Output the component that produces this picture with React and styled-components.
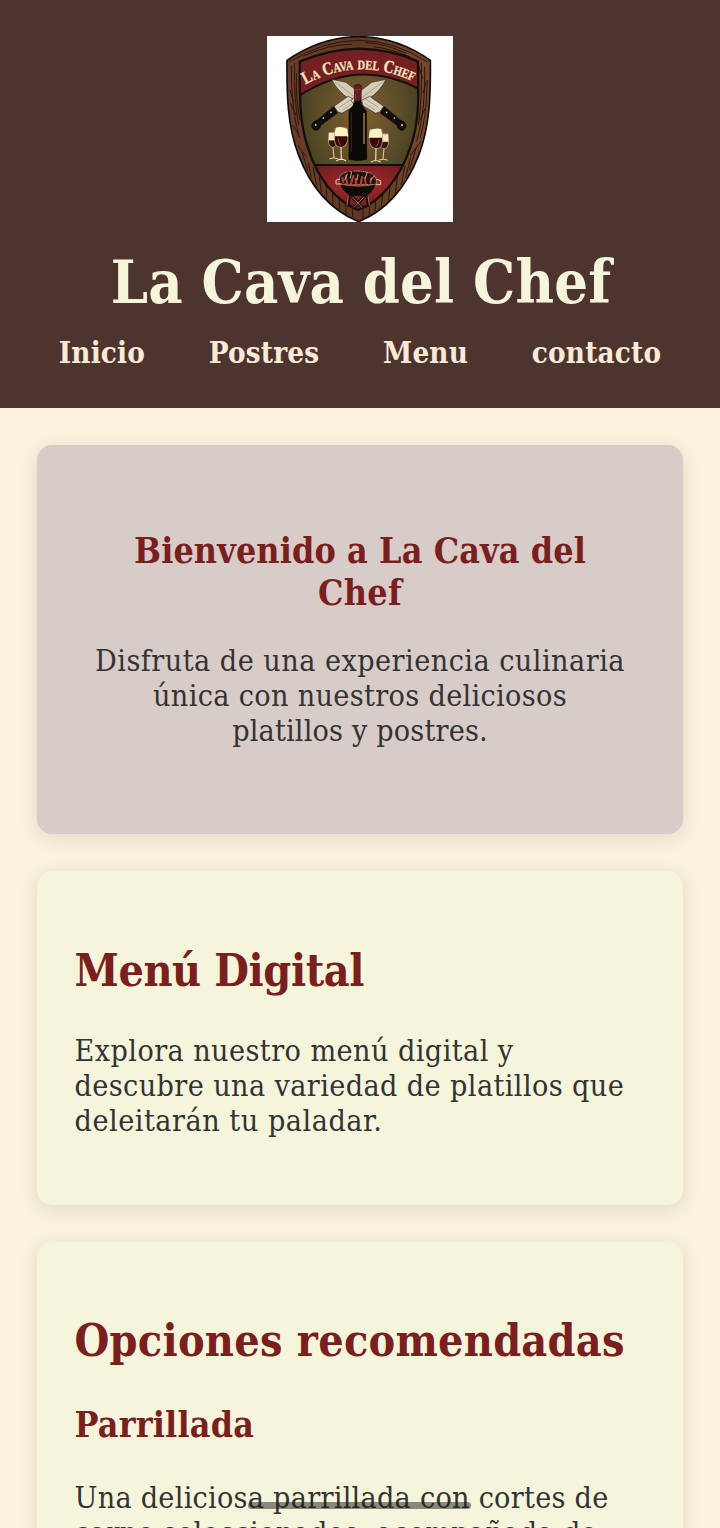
import React from "react";
import styled, { createGlobalStyle } from "styled-components";

const GlobalStyle = createGlobalStyle`
  * { box-sizing: border-box; }
  body {
    margin: 0;
    background: #faf1de;
    color: #333;
    font-family: "DejaVu Serif Condensed", "DejaVu Serif", "Liberation Serif", serif;
  }
`;

const Page = styled.div`
  height: 1528px;
  overflow: hidden;
  background: #faf1de;
`;

const Header = styled.header`
  display: flex;
  flex-direction: column;
  align-items: center;
  height: 408px;
  padding-top: 36px;
  background: #4e342e;
  color: #f5f5dc;
`;

const Logo = styled.svg`
  display: block;
  width: 186px;
  height: 186px;
  background: #fff;
`;

const SiteTitle = styled.h1`
  margin: 26px 0 0;
  padding-left: 2px;
  font-size: 59px;
  line-height: 70px;
  white-space: nowrap;
  letter-spacing: 0.2px;
`;

const Nav = styled.nav`
  display: flex;
  gap: 63.8px;
  margin-top: 17px;
`;

const NavLink = styled.a`
  color: #faebd7;
  font-weight: bold;
  font-size: 29.3px;
  line-height: 35px;
  white-space: nowrap;
  letter-spacing: 0.18px;
`;

const Main = styled.main`
  display: flex;
  flex-direction: column;
  gap: 37px;
  padding: 37px;
`;

const Card = styled.section`
  flex: none;
  height: ${(p) => p.$height}px;
  padding: ${(p) => p.$top}px 37.5px 37px;
  border-radius: 15px;
  background: ${(p) => (p.$hero ? "#d7ccc8" : "#f5f5dc")};
  text-align: ${(p) => (p.$hero ? "center" : "left")};
  box-shadow: 0 4px 19px rgba(0, 0, 0, 0.1);
`;

const Heading = styled.h2`
  margin: 0;
  color: #7b1e1e;
  font-size: ${(p) => p.$size}px;
  line-height: ${(p) => p.$line}px;
`;

const Subheading = styled.h3`
  margin: 38px 0 0;
  color: #7b1e1e;
  font-size: 35.5px;
  line-height: 42px;
`;

const Text = styled.p`
  margin: ${(p) => p.$gap}px 0 0;
  font-size: 30.2px;
  line-height: 35px;
`;

const Line = styled.span`
  display: block;
  white-space: nowrap;
  letter-spacing: ${(p) => p.$spacing || 0}px;
`;

const GestureBar = styled.div`
  position: fixed;
  left: 248px;
  top: 1502px;
  width: 223px;
  height: 7px;
  border-radius: 4px;
  background: rgba(30, 30, 25, 0.5);
`;

const Knife = () => (
  <g>
    <path d="M215 148 L258 157 L293 184 L320 212 L306 228 L268 207 Q232 184 215 148Z" fill="#d3ccb9" stroke="#3a2a18" strokeWidth="2" />
    <path d="M226 157 Q256 178 300 214" fill="none" stroke="#8e8a7c" strokeWidth="2" />
    <path d="M222 229 L264 199 L288 211 L284 227 L246 250 L234 246Z" fill="#d8d1bf" stroke="#33251a" strokeWidth="2" />
    <path d="M238 232 L275 208 M247 241 L278 220" stroke="#928b7b" strokeWidth="2" />
    <path d="M220 230 L232 249 L182 286 Q180 301 165 301 Q151 295 157 280 Q162 273 172 270Z" fill="#120e0c" stroke="#050403" strokeWidth="2" />
    <circle cx="213" cy="247" r="2.6" fill="#d6cbb5" />
    <circle cx="190" cy="264" r="2.6" fill="#d6cbb5" />
    <circle cx="167" cy="285" r="3" fill="#d6cbb5" />
  </g>
);

const Glasses = () => (
  <g strokeLinecap="round">
    <g>
      <path d="M207 309 Q200 348 218 353 Q234 350 233 309Z" fill="#473620" stroke="#cfc09a" strokeWidth="2" />
      <path d="M207 309 L229 309 L229 331 L206 331Z" fill="#f6e8bd" />
      <path d="M207 333 L230 333 Q229 350 218 351 Q208 349 207 333Z" fill="#3d0d10" />
      <path d="M219 353 L222 383 M209 386 Q220 381 234 386" fill="none" stroke="#e1d2a8" strokeWidth="3" />
    </g>
    <path d="M226 296 Q218 340 232 350 Q243 356 254 348 Q267 335 261 296Z" fill="#2e100e" stroke="#d9c89c" strokeWidth="2" />
    <path d="M228 293 Q244 288 261 297 L265 319 L225 319 Q223 305 228 293Z" fill="#fff1c6" />
    <path d="M226 321 L263 321 Q261 346 243 350 Q228 344 226 321Z" fill="#3d080d" />
    <path d="M234 326 Q235 338 241 344" fill="none" stroke="#a63d31" strokeWidth="3" />
    <path d="M243 352 L244 388 M230 392 Q244 383 257 392" fill="none" stroke="#f1dfb3" strokeWidth="3.5" />
  </g>
);

const Shield = () => (
  <Logo viewBox="21 18 558 558" role="img" aria-label="La Cava del Chef">
    <defs>
      <linearGradient id="wood" x1="0" x2="1">
        <stop offset="0" stopColor="#6b3f29" />
        <stop offset=".5" stopColor="#5e3824" />
        <stop offset="1" stopColor="#78492f" />
      </linearGradient>
      <radialGradient id="olive" cx=".5" cy=".4" r=".62">
        <stop offset="0" stopColor="#80602f" />
        <stop offset=".55" stopColor="#5a4b28" />
        <stop offset="1" stopColor="#343a20" />
      </radialGradient>
      <radialGradient id="red" cx=".5" cy=".4" r=".65">
        <stop offset="0" stopColor="#a52a2b" />
        <stop offset="1" stopColor="#60191a" />
      </radialGradient>
      <clipPath id="inner">
        <path d="M119 95 Q210 57 296 56 Q390 57 474 94 C475 190 481 270 450 355 C420 442 362 516 294 540 C226 512 173 445 145 357 C115 270 120 182 119 95Z" />
      </clipPath>
      <path id="arc" d="M136 164 Q296 74 470 160" />
    </defs>
    <path d="M81 91 Q185 20 296 20 Q410 20 511 91 C512 190 510 290 476 376 C437 475 377 542 296 575 C216 542 153 474 116 376 C82 290 80 190 81 91Z" fill="url(#wood)" stroke="#120c09" strokeWidth="5" />
    <g fill="none" stroke="#2b160d" strokeWidth="3">
      <path d="M88 96 Q190 32 296 31 Q400 31 503 96" />
      <path d="M130 78 Q210 42 276 43 M316 37 Q380 42 438 70 M340 50 Q390 55 452 82" />
      <path d="M94 106 Q92 230 118 324 M104 98 Q101 210 116 285 M110 130 Q106 205 120 270" />
      <path d="M484 98 Q487 205 475 286 M494 110 Q498 235 470 334 M502 150 Q500 260 480 325" />
      <path d="M90 180 L101 215 M91 220 L108 255 M99 285 L119 320 M475 105 L488 145 M489 190 L499 155 M480 270 L495 235" />
      <path d="M113 345 L139 381 M126 366 L143 420 M145 397 L154 443 M159 412 L170 466 M178 440 L184 487 M198 463 L200 506 M218 485 L219 526 M237 503 L239 540 M257 520 L258 556 M278 532 L278 564" />
      <path d="M482 335 L451 377 M468 354 L448 421 M452 382 L437 444 M435 407 L424 466 M413 436 L406 489 M391 461 L386 510 M369 484 L364 529 M348 503 L345 543 M329 519 L327 556 M309 531 L309 565" />
    </g>
    <g clipPath="url(#inner)">
      <rect x="110" y="50" width="380" height="500" fill="url(#olive)" />
      <path d="M110 50 H490 V183 Q298 78 110 201Z" fill="#741f22" />
      <path d="M115 199 Q298 78 482 180" fill="none" stroke="#160f0b" strokeWidth="6" />
      <rect x="110" y="405" width="380" height="145" fill="url(#red)" />
      <path d="M120 405 H480" stroke="#130c09" strokeWidth="6" />
    </g>
    <path d="M119 95 Q210 57 296 56 Q390 57 474 94 C475 190 481 270 450 355 C420 442 362 516 294 540 C226 512 173 445 145 357 C115 270 120 182 119 95Z" fill="none" stroke="#170f0b" strokeWidth="7" />
    <text
      fill="#f7e5bf"
      stroke="#f7e5bf"
      strokeWidth="0.8"
      fontFamily="Liberation Serif, serif"
      fontWeight="bold"
      fontSize="54"
      fontVariant="small-caps"
      textLength="336"
      lengthAdjust="spacingAndGlyphs"
    >
      <textPath href="#arc">La Cava del Chef</textPath>
    </text>
    <Knife />
    <g transform="translate(593 0) scale(-1 1)"><Knife /></g>
    <path d="M283 167 Q293 160 304 167 L303 215 Q304 229 319 242 L320 388 Q294 395 267 388 L267 242 Q283 226 284 211Z" fill="#0c0909" stroke="#080504" strokeWidth="2" />
    <path d="M282 168 Q293 162 305 168 L304 177 L302 211 Q293 217 284 211 L284 178Z" fill="#671c20" />
    <path d="M283 179 H303 M286 190 V207" stroke="#a33a36" strokeWidth="3" />
    <path d="M312 249 V342" stroke="#a18a66" strokeWidth="4" />
    <path d="M274 247 V365" stroke="#29221d" strokeWidth="4" />
    <Glasses />
    <g transform="translate(591 4) scale(-1 1)"><Glasses /></g>
    <g strokeLinecap="round" strokeLinejoin="round">
      <path d="M238 462 Q232 434 259 426 Q294 419 331 429 Q354 441 348 464Z" fill="#271512" stroke="#d4b48f" strokeWidth="2" strokeDasharray="9 4" />
      <path d="M250 458 L258 431 M266 460 L266 427 M281 460 L277 424 M296 460 L307 428 M311 460 L316 432 M325 460 L337 437" stroke="#1a0e0b" strokeWidth="6" />
      <path d="M250 456 L247 443 M262 461 L257 438 M273 462 L280 438 M288 464 L287 446 M302 463 L306 441 M317 461 L314 443 M331 458 L334 444" fill="none" stroke="#b5423a" strokeWidth="6" />
      <path d="M271 444 L275 425 M291 450 L294 434 M316 444 L321 428 M332 450 L343 438 M254 450 L262 432" stroke="#e2c49c" strokeWidth="2.5" />
      <path d="M241 462 Q292 476 347 462 Q338 490 316 498 H274 Q248 488 241 462Z" fill="#110c0a" />
      <path d="M238 462 Q294 475 350 462" fill="none" stroke="#b89270" strokeWidth="2" />
      <path d="M239 448 L228 450 V462 H240 M350 448 L362 452 V464 H349" fill="none" stroke="#dfc6a4" strokeWidth="3" />
      <path d="M268 498 L264 525 M321 498 L325 525 M278 502 L306 532 M311 502 L282 532" stroke="#170d0a" strokeWidth="9" />
      <path d="M265 498 L261 525 M324 498 L328 525 M278 502 L306 532 M311 502 L282 532" stroke="#b89270" strokeWidth="2.5" />
    </g>
  </Logo>
);

export default function App() {
  return (
    <Page>
      <GlobalStyle />
      <Header>
        <Shield />
        <SiteTitle>La Cava del Chef</SiteTitle>
        <Nav>
          <NavLink>Inicio</NavLink>
          <NavLink>Postres</NavLink>
          <NavLink>Menu</NavLink>
          <NavLink>contacto</NavLink>
        </Nav>
      </Header>
      <Main>
        <Card $hero $height={388.5} $top={85}>
          <Heading $size={35.6} $line={42}>
            <Line $spacing={0.08}>Bienvenido a La Cava del</Line>
            <Line $spacing={0.3}>Chef</Line>
          </Heading>
          <Text $gap={28.5}>
            <Line $spacing={0.46}>Disfruta de una experiencia culinaria</Line>
            <Line $spacing={0.33}>única con nuestros deliciosos</Line>
            <Line $spacing={0.17}>platillos y postres.</Line>
          </Text>
        </Card>
        <Card $height={334.5} $top={73}>
          <Heading $size={44.5} $line={52}>
            <Line $spacing={-0.43}>Menú Digital</Line>
          </Heading>
          <Text $gap={37}>
            <Line $spacing={0.42}>Explora nuestro menú digital y</Line>
            <Line $spacing={0.39}>descubre una variedad de platillos que</Line>
            <Line $spacing={0.51}>deleitarán tu paladar.</Line>
          </Text>
        </Card>
        <Card $height={500} $top={72}>
          <Heading $size={44.5} $line={52}>
            <Line $spacing={0.24}>Opciones recomendadas</Line>
          </Heading>
          <Subheading>
            <Line $spacing={0.2}>Parrillada</Line>
          </Subheading>
          <Text $gap={34}>
            <Line $spacing={0.26}>Una deliciosa parrillada con cortes de</Line>
            <Line $spacing={0.32}>carne seleccionados, acompañada de</Line>
          </Text>
        </Card>
      </Main>
      <GestureBar />
    </Page>
  );
}
